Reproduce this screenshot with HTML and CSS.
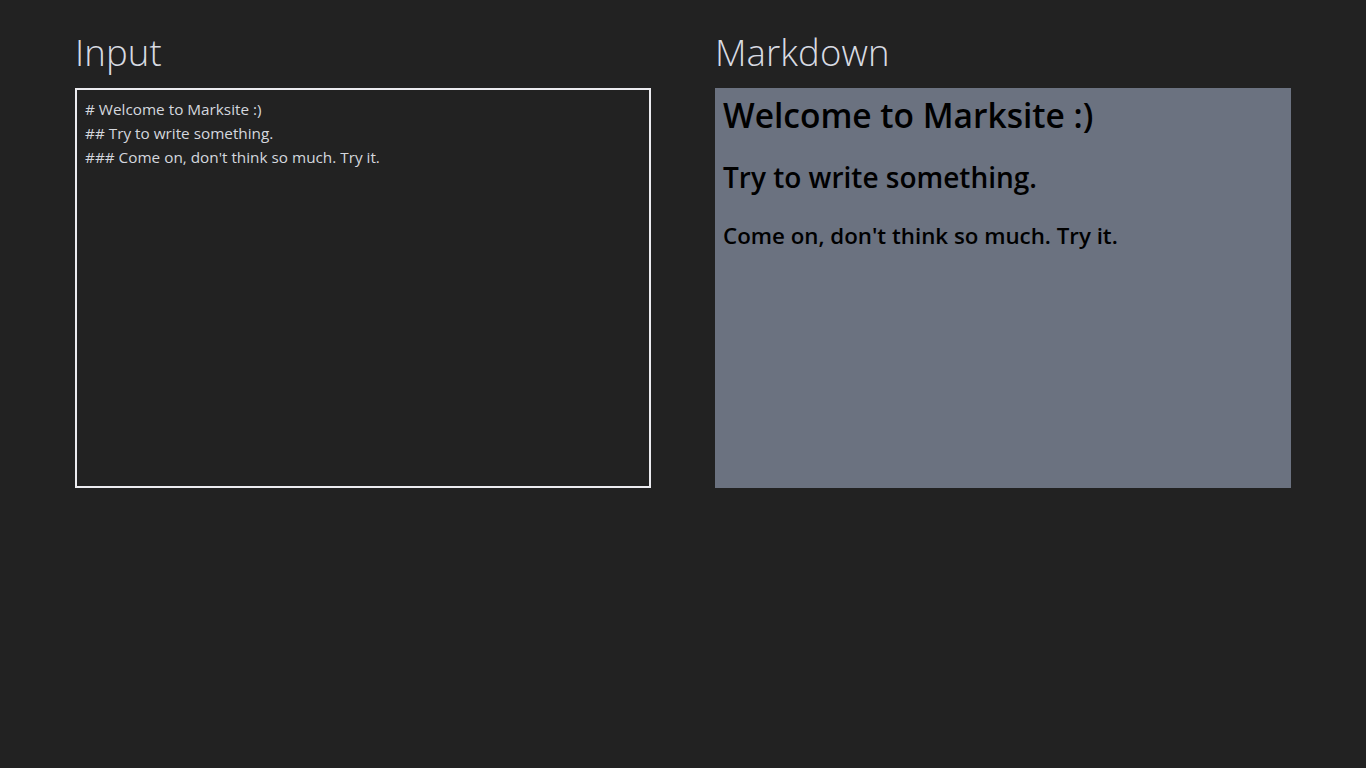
FILE: index.html
```html
<!DOCTYPE html>
<html lang="en">
<head>
<meta charset="utf-8">
<title>Marksite</title>
<link rel="stylesheet" href="styles.css">
</head>
<body>
<main class="app">
  <section class="col">
    <h2 class="title">Input</h2>
    <textarea class="editor" spellcheck="false"># Welcome to Marksite :)
## Try to write something.
### Come on, don't think so much. Try it.</textarea>
  </section>
  <section class="col">
    <h2 class="title">Markdown</h2>
    <div class="preview">
      <h1 class="md-h1">Welcome to Marksite :)</h1>
      <h2 class="md-h2">Try to write something.</h2>
      <h3 class="md-h3">Come on, don't think so much. Try it.</h3>
    </div>
  </section>
</main>
</body>
</html>
```

FILE: styles.css
```css
* { box-sizing: border-box; }
html, body {
  margin: 0;
  padding: 0;
  background: #222222;
  height: 100%;
}
body {
  font-family: "Open Sans", "Noto Sans", sans-serif;
  color: #d8dbe2;
}
.app {
  display: flex;
  gap: 64px;
  padding: 32px 75px 0 75px;
}
.col {
  flex: 1;
  display: flex;
  flex-direction: column;
}
.title {
  margin: 0 0 16px 0;
  font-size: 36.5px;
  line-height: 40px;
  font-weight: 300;
  color: #d8dbe2;
  letter-spacing: 0.1px;
}
.editor {
  width: 100%;
  height: 400px;
  background: #222222;
  border: 2px solid #ececf0;
  color: #d4d7de;
  font-family: "Open Sans", "Noto Sans", sans-serif;
  font-size: 15.3px;
  line-height: 24px;
  padding: 7px 8px;
  resize: none;
  outline: none;
}
.preview {
  height: 400px;
  background: #6b7280;
  padding: 7px 8px 8px 8px;
  color: #000;
}
.md-h1 {
  margin: 0;
  font-size: 33.5px;
  line-height: 40px;
  font-weight: 600;
}
.md-h2 {
  margin: 24px 0 0 0;
  font-size: 28px;
  line-height: 36px;
  font-weight: 600;
}
.md-h3 {
  margin: 25px 0 0 0;
  font-size: 22.3px;
  line-height: 32px;
  font-weight: 600;
}
```
